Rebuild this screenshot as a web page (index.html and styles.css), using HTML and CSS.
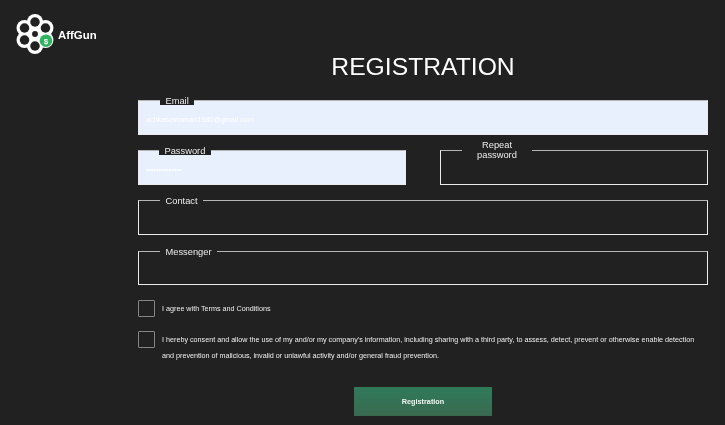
FILE: index.html
```html
<!DOCTYPE html>
<html lang="en">
<head>
<meta charset="utf-8">
<title>AffGun Registration</title>
<link rel="stylesheet" href="styles.css">
</head>
<body>
<div class="page">
  <aside class="brand">
    <svg class="brand-icon" width="40" height="40" viewBox="0 0 42 42" aria-hidden="true">
      <g fill="#fff">
        <circle cx="21" cy="21" r="16"/>
        <circle cx="21" cy="8.4" r="8.4"/>
        <circle cx="32" cy="14.7" r="8.4"/>
        <circle cx="32" cy="27.3" r="8.4"/>
        <circle cx="21" cy="33.6" r="8.4"/>
        <circle cx="10" cy="27.3" r="8.4"/>
        <circle cx="10" cy="14.7" r="8.4"/>
      </g>
      <g fill="#212121">
        <circle cx="21" cy="8.4" r="5"/>
        <circle cx="32" cy="14.7" r="5"/>
        <circle cx="21" cy="33.6" r="5"/>
        <circle cx="10" cy="27.3" r="5"/>
        <circle cx="10" cy="14.7" r="5"/>
        <circle cx="21" cy="21" r="3.1"/>
      </g>
      <circle cx="32.5" cy="28" r="6.6" fill="#2fb45f"/>
      <text class="brand-dollar" x="32.5" y="31" text-anchor="middle">$</text>
    </svg>
    <span class="brand-name">AffGun</span>
  </aside>
  <main class="content">
    <h1 class="title">REGISTRATION</h1>
    <form class="form">
      <fieldset class="field field-filled">
        <legend class="field-label">Email</legend>
        <input class="field-input" type="email" value="achkasovroman1980@gmail.com">
      </fieldset>
      <div class="field-pair">
        <fieldset class="field field-filled">
          <legend class="field-label field-label-tight">Password</legend>
          <input class="field-input" type="password" value="12345678901234">
        </fieldset>
        <fieldset class="field field-tall">
          <legend class="field-label field-label-wrap"><span class="field-label-lines">Repeat password</span></legend>
          <input class="field-input" type="password">
        </fieldset>
      </div>
      <fieldset class="field">
        <legend class="field-label">Contact</legend>
        <input class="field-input" type="text">
      </fieldset>
      <fieldset class="field">
        <legend class="field-label">Messenger</legend>
        <input class="field-input" type="text">
      </fieldset>
      <label class="check check-first">
        <span class="check-box"></span>
        <span class="check-text">I agree with Terms and Conditions</span>
      </label>
      <label class="check check-second">
        <span class="check-box"></span>
        <span class="check-text">I hereby consent and allow the use of my and/or my company's information, including sharing with a third party, to assess, detect, prevent or otherwise enable detection and prevention of malicious, invalid or unlawful activity and/or general fraud prevention.</span>
      </label>
      <button class="submit" type="button">Registration</button>
    </form>
  </main>
</div>
</body>
</html>
```
FILE: styles.css
```css
* { box-sizing: border-box; }

html, body {
  margin: 0;
  height: 100%;
  overflow: hidden;
  background: #212121;
  color: #fff;
  font-family: "Liberation Sans", Arial, sans-serif;
}

.page {
  display: grid;
  grid-template-columns: 138px 570px;
  height: 425px;
  filter: blur(0.35px);
}

.brand {
  display: flex;
  align-items: flex-start;
  padding: 14px 0 0 15px;
}

.brand-icon { flex: none; }

.brand-dollar {
  fill: #fff;
  font-size: 8.5px;
  font-weight: 700;
  font-family: "Liberation Sans", Arial, sans-serif;
}

.brand-name {
  margin: 15px 0 0 3px;
  font-size: 11.4px;
  line-height: 13px;
  font-weight: 700;
}

.content { min-width: 0; }

.title {
  margin: 0;
  padding-top: 52px;
  font-size: 24.7px;
  line-height: 29px;
  font-weight: 400;
  text-align: center;
}

.form {
  display: flex;
  flex-direction: column;
  gap: 11.4px;
  margin-top: 15px;
}

.field {
  margin: 0;
  padding: 0;
  min-width: 0;
  height: 38.8px;
  border: 1px solid #ebebeb;
  border-top-color: #b5b5b5;
  border-radius: 0;
}

.field-filled { background: #e8f0fe; }

.field-tall {
  height: 43.8px;
  margin-top: -5px;
}

.field-label {
  margin-left: 21px;
  padding: 1px 5.5px 0;
  font-size: 9.3px;
  line-height: 8px;
  color: #ececec;
  background: #212121;
}

.field-label-tight { margin-left: 20px; }

.field-label-wrap {
  width: 70px;
  padding: 0 5px;
  line-height: 9.5px;
}

.field-label-lines {
  display: block;
  text-align: center;
}

.field-input {
  display: block;
  width: 100%;
  height: 29px;
  padding: 0 7px;
  border: 0;
  outline: 0;
  background: transparent;
  color: #fff;
  font-family: inherit;
  font-size: 7.25px;
}

.field-tall .field-input { height: 24px; }

.field-pair {
  display: grid;
  grid-template-columns: 268px 268px;
  justify-content: space-between;
  align-items: end;
}

.check {
  display: flex;
  align-items: flex-start;
  gap: 7px;
  font-size: 7.2px;
  color: #eee;
}

.check-first { margin-top: 3px; }
.check-second { margin-top: 3px; }

.check-box {
  flex: none;
  width: 17px;
  height: 17px;
  border: 1px solid #858585;
  border-radius: 1px;
}

.check-text {
  padding-top: 1px;
  line-height: 16px;
}

.submit {
  align-self: center;
  width: 138px;
  height: 29px;
  margin-top: 11px;
  border: 0;
  background: linear-gradient(#2f7a5a, #3a6a50);
  color: #f4f4f4;
  font-family: inherit;
  font-size: 7.3px;
  font-weight: 700;
}
```
